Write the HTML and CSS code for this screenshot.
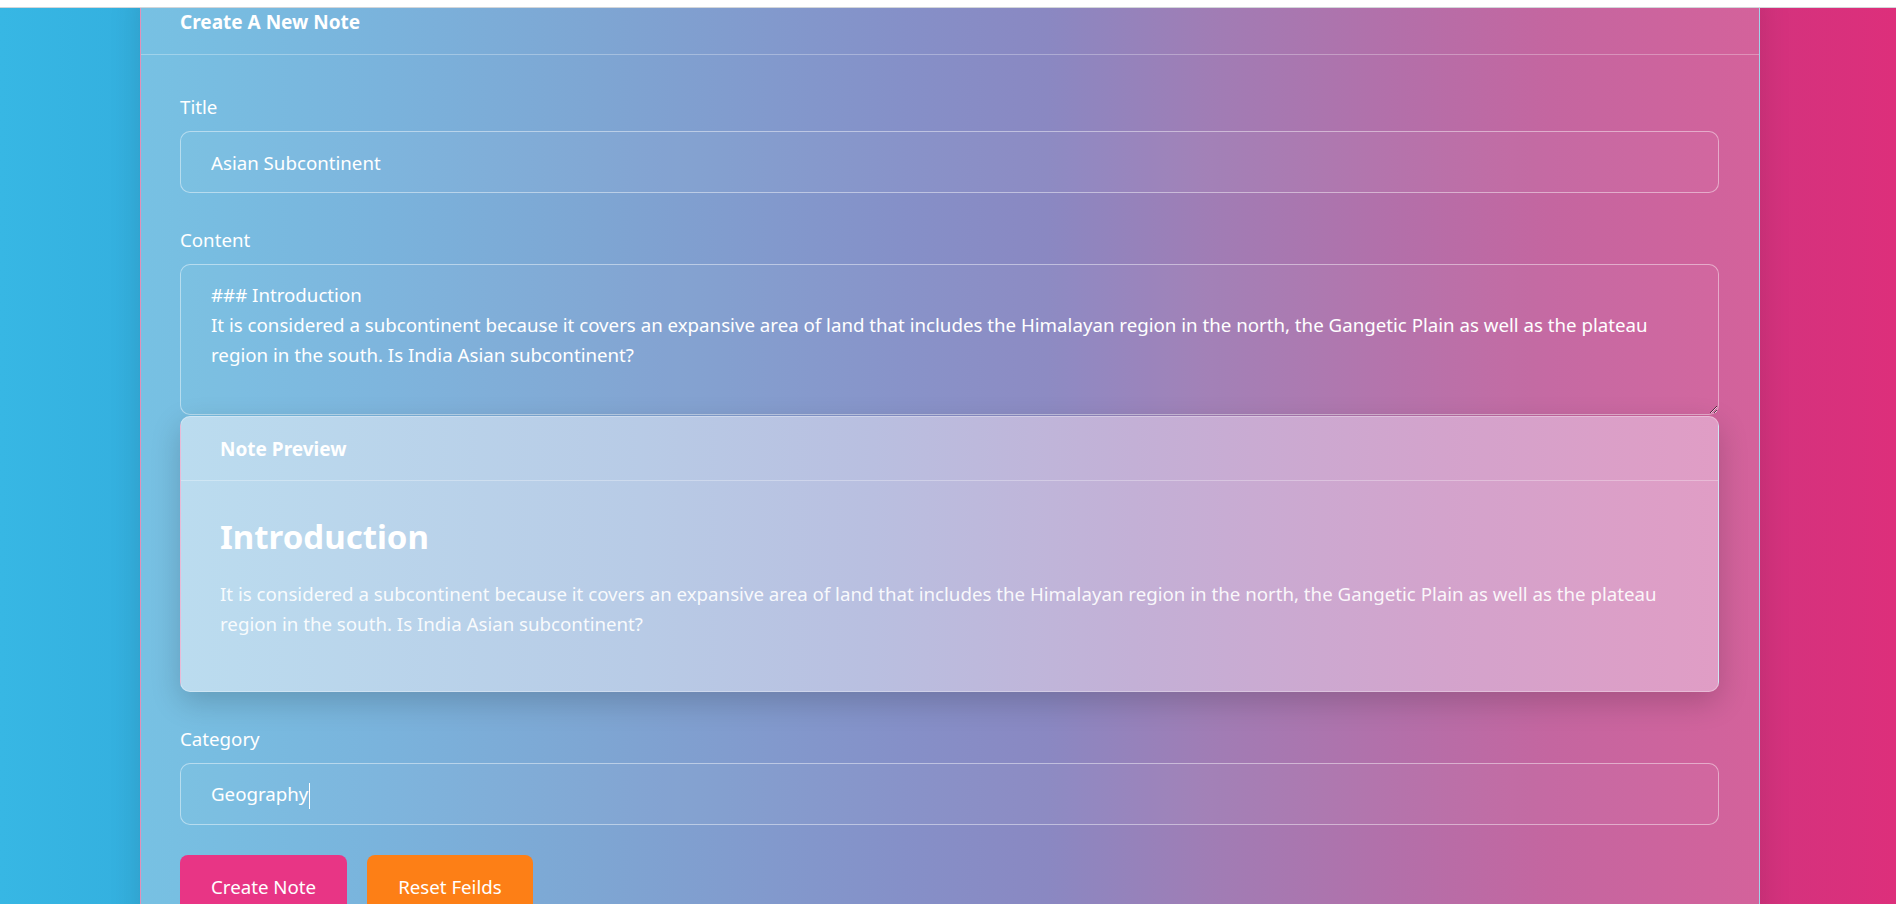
FILE: index.html
```html
<!DOCTYPE html>
<html lang="en">
<head>
<meta charset="utf-8">
<title>Create A New Note</title>
<link rel="stylesheet" href="styles.css">
</head>
<body>
<div class="topbar"></div>
<main class="page">
  <section class="card">
    <header class="card-header">Create A New Note</header>
    <form class="card-body">
      <div class="group">
        <label class="label" for="title">Title</label>
        <input class="field" id="title" type="text" value="Asian Subcontinent">
      </div>
      <div class="group">
        <label class="label" for="content">Content</label>
        <textarea class="field area" id="content">### Introduction
It is considered a subcontinent because it covers an expansive area of land that includes the Himalayan region in the north, the Gangetic Plain as well as the plateau region in the south. Is India Asian subcontinent?</textarea>
        <div class="preview">
          <div class="preview-header">Note Preview</div>
          <div class="preview-body">
            <h3 class="preview-title">Introduction</h3>
            <p class="preview-text">It is considered a subcontinent because it covers an expansive area of land that includes the Himalayan region in the north, the Gangetic Plain as well as the plateau region in the south. Is India Asian subcontinent?</p>
          </div>
        </div>
      </div>
      <div class="group last">
        <label class="label">Category</label>
        <div class="field" role="textbox">Geography<span class="caret"></span></div>
      </div>
      <div class="actions">
        <button type="button" class="btn btn-pink">Create Note</button>
        <button type="button" class="btn btn-orange">Reset Feilds</button>
      </div>
    </form>
  </section>
</main>
</body>
</html>
```

FILE: styles.css
```css
* {
  box-sizing: border-box;
}

html,
body {
  margin: 0;
  height: 100%;
}

body {
  background: #ffffff;
  overflow: hidden;
  color: #ffffff;
  font-family: "Noto Sans", "Open Sans", sans-serif;
  font-size: 18.7px;
}

.topbar {
  height: 8px;
  background: #ffffff;
  border-bottom: 1px solid #d3d6d9;
}

.page {
  height: 896px;
  overflow: hidden;
  padding: 0 136px 0 140px;
  background: linear-gradient(to right, #37b7e4 0%, #34b0df 7%, #8577bd 50%, #d2337e 92%, #dd2f7b 100%);
}

.card {
  margin-top: -18px;
  background: linear-gradient(to right, #77c1e3 0%, #7ab3dc 15%, #7ea6d3 28%, #8590c8 47%, #8a88c2 56%, #a07db5 66%, #b46fa9 78%, #c466a0 87%, #d4629b 100%);
  border-left: 1px solid rgba(255, 255, 255, 0.3);
  border-right: 1px solid rgba(255, 255, 255, 0.3);
  box-shadow: 0 0 30px rgba(0, 0, 0, 0.12);
  min-height: 1000px;
}

.card-header {
  padding: 20px 39px;
  font-size: 19px;
  font-weight: 700;
  line-height: 24px;
  border-bottom: 1px solid rgba(255, 255, 255, 0.3);
}

.card-body {
  padding: 38px 40px 0 39px;
}

.group {
  margin-bottom: 33px;
}

.group.last {
  margin-bottom: 30px;
}

.label {
  display: block;
  line-height: 27px;
  margin-bottom: 11px;
}

.field {
  display: block;
  width: 100%;
  height: 62px;
  padding: 0 30px;
  border: 1px solid rgba(255, 255, 255, 0.45);
  border-radius: 10px;
  background: rgba(255, 255, 255, 0.03);
  color: #ffffff;
  font: inherit;
  line-height: 60px;
  outline: none;
}

.area {
  height: 151px;
  padding: 15px 30px;
  line-height: 30px;
  resize: vertical;
}

.caret {
  display: inline-block;
  width: 1px;
  height: 26px;
  margin-left: 1px;
  background: #ffffff;
  vertical-align: middle;
}

.preview {
  margin-top: 1px;
  border: 1px solid rgba(255, 255, 255, 0.3);
  border-radius: 10px;
  background: linear-gradient(to right, #bbdcef 0%, #b8cbe6 30%, #b9bfe0 45%, #c3b0d6 62%, #d3a3cc 82%, #e09dc5 100%);
  box-shadow: 0 10px 30px rgba(0, 0, 0, 0.18);
}

.preview-header {
  padding: 20px 39px 19px;
  font-size: 19px;
  font-weight: 700;
  line-height: 24px;
  border-bottom: 1px solid rgba(255, 255, 255, 0.3);
}

.preview-body {
  padding: 37px 39px 52px;
}

.preview-title {
  margin: 0 0 23px;
  font-size: 33px;
  line-height: 38px;
  font-weight: 700;
}

.preview-text {
  margin: 0;
  line-height: 30px;
  color: rgba(255, 255, 255, 0.92);
}

.actions {
  display: flex;
  gap: 20px;
}

.btn {
  padding: 20px 31px;
  border: none;
  border-radius: 8px;
  color: #ffffff;
  font: inherit;
  line-height: 24px;
}

.btn-pink {
  background: #e83585;
}

.btn-orange {
  background: #fd7f16;
}
```
